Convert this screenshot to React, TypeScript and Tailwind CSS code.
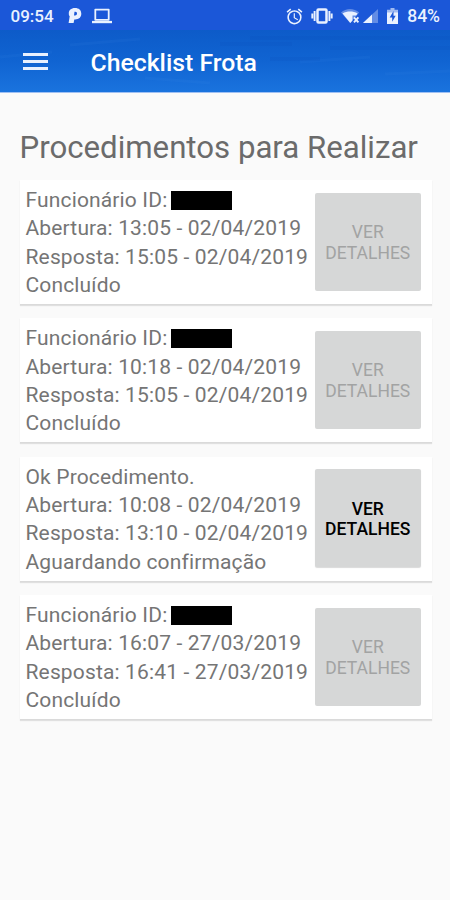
import { MdAlarm } from 'react-icons/md'

type Procedure = {
  employee: boolean
  opened: string
  answered: string
  status: string
  enabled?: boolean
}

const procedures: Procedure[] = [
  { employee: true, opened: '13:05 - 02/04/2019', answered: '15:05 - 02/04/2019', status: 'Concluído' },
  { employee: true, opened: '10:18 - 02/04/2019', answered: '15:05 - 02/04/2019', status: 'Concluído' },
  {
    employee: false,
    opened: '10:08 - 02/04/2019',
    answered: '13:10 - 02/04/2019',
    status: 'Aguardando confirmação',
    enabled: true,
  },
  { employee: true, opened: '16:07 - 27/03/2019', answered: '16:41 - 27/03/2019', status: 'Concluído' },
]

function StatusBar() {
  return (
    <div className="flex h-[30px] items-center bg-[#1b57d8] pt-[2px] pr-[10px] pl-[10.5px] text-[#eaf1ff]">
      <span className="w-[46px] text-[17px] leading-5 font-medium">09:54</span>
      <svg className="ml-[11.5px] h-4 w-[14px]" viewBox="0 0 14 16" aria-hidden="true">
        <path
          d="M7 0C3 0 .8 2.300.8 5.400c0 1.300.3 2.100.9 2.900L.6 14.900h5l.7-3.500c4.400.3 7-2.100 7-5.700C13.300 2.100 10.900 0 7 0zM6.500 3.800h.9c1 0 1.600.7 1.600 1.700 0 1.200-.9 2-2.100 1.900h-.9z"
          fill="currentColor"
          fillRule="evenodd"
        />
      </svg>
      <svg className="ml-[10px] h-4 w-[20px]" viewBox="0 0 20 16" fill="none" aria-hidden="true">
        <path d="M3.300 1.600h13.400v10.200H3.300z" stroke="currentColor" strokeWidth="1.800" strokeLinejoin="round" />
        <path d="M0 12.900h20v2.300H0z" fill="currentColor" />
      </svg>
      <div className="ml-auto flex items-center">
        <MdAlarm className="size-[19px]" />
        <svg className="ml-[7px] h-4 w-[22px]" viewBox="0 0 22 16" fill="none" aria-hidden="true">
          <rect x="6.500" y="1.400" width="9" height="13.200" rx="1" stroke="currentColor" strokeWidth="2.500" />
          <path d="M3.600 3v10M18.400 3v10M1.300 5.500v5M20.700 5.500v5" stroke="currentColor" strokeWidth="1.900" />
        </svg>
        <svg className="ml-[8px] h-4 w-[19px]" viewBox="0 0 19 16" fill="none" aria-hidden="true">
          <path d="M0 4.500C5-.2 13-.2 18.200 4.500L14 9.500 9.100 15z" fill="currentColor" opacity=".35" />
          <path d="M1.600 5.500C6 2.900 12 2.900 16.600 5.500l-1.500 2h-3.600v5L9.300 15z" fill="currentColor" />
          <path d="m13 9.300 4.400 5m0-5-4.400 5" stroke="currentColor" strokeWidth="1.900" />
        </svg>
        <svg className="ml-[3px] h-4 w-[15px]" viewBox="0 0 15 16" aria-hidden="true">
          <path d="M0 15 15 1v14z" fill="currentColor" opacity=".35" />
          <path d="M0 15 9 6.600V15z" fill="currentColor" />
        </svg>
        <svg className="ml-[9px] h-4 w-[11px]" viewBox="0 0 11 16" aria-hidden="true">
          <path d="M3.500 0h4v1.700H11V5H0V1.700h3.500z" fill="currentColor" opacity=".65" />
          <path d="M0 4.500h11V16H0z" fill="currentColor" />
          <path d="M6.500 3 2.700 9.400h2.500v4.300l3.500-6H6.500z" fill="#1b57d8" />
        </svg>
        <span className="ml-[9px] text-[17.500px] leading-5 font-medium">84%</span>
      </div>
    </div>
  )
}

function AppBar() {
  return (
    <header className="relative flex h-[63px] items-center border-b border-[#9fc0f3] bg-linear-to-b from-[#0d5bc9] via-[#1064d2] to-[#1a73de] pl-[23px] text-white">
      {/* faint streaks of the sky texture */}
      <svg className="absolute inset-0 h-[62px] w-[450px]" viewBox="0 0 450 62" fill="none" aria-hidden="true">
        <path d="M70 15 140 9M0 27l52-5M300 32l70-5M385 44l65-3M145 48l65 5" stroke="#5ba0f0" strokeWidth="3" opacity=".07" />
        <path d="M220 14h72M250 8h200M330 18h120M270 29h50" stroke="#0549b4" strokeWidth="4" opacity=".1" />
      </svg>
      <button type="button" aria-label="Menu" className="relative flex w-[25px] flex-col gap-[4px] pt-px">
        <span className="h-[3px] bg-[#e8f1ff]" />
        <span className="h-[3px] bg-[#e8f1ff]" />
        <span className="h-[3px] bg-[#e8f1ff]" />
      </button>
      <h1 className="relative ml-[42.500px] pt-[4px] text-[24.800px] leading-8 font-medium">Checklist Frota</h1>
    </header>
  )
}

function ProcedureCard({ employee, opened, answered, status, enabled }: Procedure) {
  return (
    <li className="flex h-[125px] justify-between border-b border-[#dadada] bg-white pt-[6px] pr-[11px] pl-[6px] shadow-[0_1px_1px_rgba(0,0,0,0.10)]">
      <div className="text-[21px] leading-[28.300px] tracking-[0.150px] whitespace-nowrap text-[#757575]">
        {employee ? (
          <p className="flex">
            Funcionário ID:
            <span className="mt-[5px] ml-[3.500px] h-[19px] w-[61px] bg-black" />
          </p>
        ) : (
          <p>Ok Procedimento.</p>
        )}
        <p>Abertura: {opened}</p>
        <p>Resposta: {answered}</p>
        <p>{status}</p>
      </div>
      <button
        type="button"
        disabled={!enabled}
        className="mt-[6.500px] h-[98px] w-[105.500px] shrink-0 rounded-[2px] bg-[#d6d7d7] pt-[2px] text-[17.500px] leading-[20.500px] font-medium text-black shadow-[0_1px_1px_rgba(0,0,0,0.15)] disabled:font-normal disabled:text-[#a2a3a3] disabled:shadow-none"
      >
        VER
        <br />
        DETALHES
      </button>
    </li>
  )
}

export default function App() {
  return (
    <div className="flex h-[900px] w-[450px] flex-col overflow-hidden bg-[#fafafa] font-[Roboto,sans-serif]">
      <StatusBar />
      <AppBar />
      <main className="pt-[35px] pr-[18.500px] pl-[19.500px]">
        <h2 className="text-[31.200px] leading-10 whitespace-nowrap text-[#6b6b6b]">Procedimentos para Realizar</h2>
        <ul className="mt-[12px] flex flex-col gap-[13.400px]">
          {procedures.map((procedure) => (
            <ProcedureCard key={procedure.opened} {...procedure} />
          ))}
        </ul>
      </main>
    </div>
  )
}
